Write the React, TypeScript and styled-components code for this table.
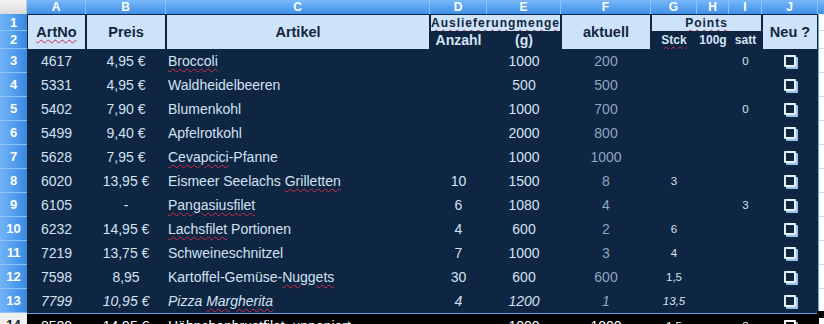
import styled, { createGlobalStyle } from 'styled-components';

const NAVY = '#0e2641';
const HEAD_BG = '#cde3fa';
const EDGE = '#6aa4e4';

const WIDTHS = [59, 80, 264, 57, 74, 90, 46, 32, 33, 56];
const COL_TEMPLATE = WIDTHS.map((w) => `${w}px`).join(' ');
const LETTERS = ['A', 'B', 'C', 'D', 'E', 'F', 'G', 'H', 'I', 'J'];
const ROW_HEIGHTS = [17, 18, 24, 24, 24, 24, 24, 24, 24, 24, 24, 24, 24, 24];

type Row = {
  nr: string;
  price: string;
  name: React.ReactNode;
  count?: string;
  grams: string;
  current: string;
  stck?: string;
  satt?: string;
};

const GlobalStyle = createGlobalStyle`
  html, body {
    margin: 0;
    padding: 0;
    overflow: hidden;
    background: #ffffff;
    font-family: "Liberation Sans", Arial, sans-serif;
  }
`;

const Sheet = styled.div`
  display: grid;
  grid-template-columns: 27px 1fr;
  grid-template-rows: 14px auto;
  width: 824px;
`;

const Corner = styled.div`
  background: linear-gradient(#f4f4f4, #dcdcdc);
  border-right: 1px solid #c8c8c8;
`;

const ColumnBar = styled.div`
  display: grid;
  grid-template-columns: ${COL_TEMPLATE} 1fr;
  background: linear-gradient(#78b8fa, #3f8fe6);
`;

const ColumnLetter = styled.div`
  display: flex;
  align-items: center;
  justify-content: center;
  border-right: 1px solid #8cc2f6;
  color: #ffffff;
  font-size: 12px;
  font-weight: bold;
  line-height: 1;
`;

const RowBar = styled.div`
  display: flex;
  flex-direction: column;
`;

const RowNumber = styled.div<{ $height: number; $plain?: boolean }>`
  height: ${(p) => p.$height}px;
  flex: none;
  box-sizing: border-box;
  display: flex;
  align-items: center;
  justify-content: center;
  border-bottom: 1px solid ${(p) => (p.$plain ? '#c8c8c8' : '#8cc2f6')};
  background: ${(p) =>
    p.$plain ? '#efefef' : 'linear-gradient(90deg, #72b4f8, #4292e8 80%, #3a86d8)'};
  color: ${(p) => (p.$plain ? '#202020' : '#ffffff')};
  font-size: 13px;
  font-weight: bold;
`;

const Body = styled.div`
  display: grid;
  grid-template-columns: 792px 1fr;
  align-content: start;
`;

const Selection = styled.div`
  position: relative;
  background: ${NAVY};
  border-right: 1px solid ${EDGE};
  border-bottom: 1px solid ${EDGE};
`;

const FillHandle = styled.div`
  position: absolute;
  right: -6px;
  bottom: -5px;
  width: 7px;
  height: 7px;
  background: #000000;
`;

const HeadGrid = styled.div`
  display: grid;
  grid-template-columns: ${COL_TEMPLATE};
  grid-template-rows: 17px 18px;
`;

const HeadCell = styled.div<{ $area: string; $dark?: boolean; $size?: number; $spaced?: boolean }>`
  grid-area: ${(p) => p.$area};
  box-sizing: border-box;
  display: flex;
  align-items: center;
  justify-content: center;
  background: ${(p) => (p.$dark ? NAVY : HEAD_BG)};
  border-left: 1px solid ${NAVY};
  border-right: 1px solid ${NAVY};
  border-top: ${(p) => (p.$dark ? 'none' : `1px solid ${NAVY}`)};
  color: ${(p) => (p.$dark ? '#d4e4f6' : '#13253d')};
  font-size: ${(p) => p.$size ?? 14.5}px;
  font-weight: bold;
  letter-spacing: ${(p) => (p.$spaced ? '1px' : '0')};
  white-space: nowrap;
  overflow: hidden;
`;

const DataRow = styled.div<{ $italic?: boolean; $black?: boolean }>`
  display: grid;
  grid-template-columns: ${COL_TEMPLATE};
  height: 24px;
  background: ${(p) => (p.$black ? '#000000' : 'transparent')};
  font-style: ${(p) => (p.$italic ? 'italic' : 'normal')};
`;

const Cell = styled.div<{ $align?: 'left' | 'center'; $tone?: 'main' | 'muted' | 'white'; $small?: boolean }>`
  display: flex;
  align-items: center;
  justify-content: ${(p) => (p.$align === 'left' ? 'flex-start' : 'center')};
  padding-left: ${(p) => (p.$align === 'left' ? '2px' : '0')};
  color: ${(p) => (p.$tone === 'muted' ? '#8ea6c2' : p.$tone === 'white' ? '#ffffff' : '#d2e2f4')};
  font-size: ${(p) => (p.$small ? 11.5 : 14)}px;
  white-space: nowrap;
  overflow: hidden;
`;

const Wavy = styled.span`
  text-decoration: underline wavy #d0284a;
  text-decoration-thickness: 1px;
  text-underline-offset: 2px;
`;

const Checkbox = styled.span<{ $dim?: boolean }>`
  width: 8px;
  height: 8px;
  border: 2px solid ${(p) => (p.$dim ? '#ffffff' : '#e8f1fb')};
  box-shadow: 2px 2px 0 ${(p) => (p.$dim ? '#9a9a9a' : '#9dc5f0')};
  border-radius: 1px;
`;

const RightFill = styled.div`
  display: flex;
  flex-direction: column;
  background: #ffffff;
`;

const GridLine = styled.div<{ $height: number }>`
  height: ${(p) => p.$height}px;
  box-sizing: border-box;
  border-bottom: 1px solid #d0d7e5;
`;

const rows: Row[] = [
  { nr: '4617', price: '4,95 €', name: <Wavy>Broccoli</Wavy>, grams: '1000', current: '200', satt: '0' },
  { nr: '5331', price: '4,95 €', name: 'Waldheidelbeeren', grams: '500', current: '500' },
  { nr: '5402', price: '7,90 €', name: 'Blumenkohl', grams: '1000', current: '700', satt: '0' },
  { nr: '5499', price: '9,40 €', name: 'Apfelrotkohl', grams: '2000', current: '800' },
  { nr: '5628', price: '7,95 €', name: <><Wavy>Cevapcici</Wavy>-Pfanne</>, grams: '1000', current: '1000' },
  { nr: '6020', price: '13,95 €', name: <>Eismeer Seelachs <Wavy>Grilletten</Wavy></>, count: '10', grams: '1500', current: '8', stck: '3' },
  { nr: '6105', price: '-', name: <Wavy>Pangasiusfilet</Wavy>, count: '6', grams: '1080', current: '4', satt: '3' },
  { nr: '6232', price: '14,95 €', name: <><Wavy>Lachsfilet</Wavy> Portionen</>, count: '4', grams: '600', current: '2', stck: '6' },
  { nr: '7219', price: '13,75 €', name: 'Schweineschnitzel', count: '7', grams: '1000', current: '3', stck: '4' },
  { nr: '7598', price: '8,95', name: <>Kartoffel-Gemüse-<Wavy>Nuggets</Wavy></>, count: '30', grams: '600', current: '600', stck: '1,5' },
  { nr: '7799', price: '10,95 €', name: <>Pizza <Wavy>Margherita</Wavy></>, count: '4', grams: '1200', current: '1', stck: '13,5' },
];

const lastRow: Row = {
  nr: '8520',
  price: '14,95 €',
  name: <>Hähnchenbrustfilet, <Wavy>unpaniert</Wavy></>,
  grams: '1000',
  current: '1000',
  stck: '1,5',
  satt: '3',
};

const RowCells = ({ row, black }: { row: Row; black?: boolean }) => {
  const tone = black ? 'white' : 'main';
  return (
    <>
      <Cell $tone={tone}>{row.nr}</Cell>
      <Cell $tone={tone}>{row.price}</Cell>
      <Cell $tone={tone} $align='left'>
        <span>{row.name}</span>
      </Cell>
      <Cell $tone={tone}>{row.count}</Cell>
      <Cell $tone={tone}>{row.grams}</Cell>
      <Cell $tone={black ? 'white' : 'muted'}>{row.current}</Cell>
      <Cell $tone={tone} $small>{row.stck}</Cell>
      <Cell />
      <Cell $tone={tone} $small>{row.satt}</Cell>
      <Cell>
        <Checkbox $dim={black} />
      </Cell>
    </>
  );
};

const App = () => {
  return (
    <>
      <GlobalStyle />
      <Sheet>
        <Corner />
        <ColumnBar>
          {LETTERS.map((l) => (
            <ColumnLetter key={l}>{l}</ColumnLetter>
          ))}
          <div />
        </ColumnBar>

        <RowBar>
          {ROW_HEIGHTS.map((h, i) => (
            <RowNumber key={i} $height={h} $plain={i === 13}>
              {i + 1}
            </RowNumber>
          ))}
        </RowBar>

        <Body>
          <Selection>
            <HeadGrid>
              <HeadCell $area='1 / 1 / 3 / 2'>
                <Wavy>ArtNo</Wavy>
              </HeadCell>
              <HeadCell $area='1 / 2 / 3 / 3'>Preis</HeadCell>
              <HeadCell $area='1 / 3 / 3 / 4'>Artikel</HeadCell>
              <HeadCell $area='1 / 4 / 2 / 6' $size={12} $spaced>
                <Wavy>Auslieferungmenge</Wavy>
              </HeadCell>
              <HeadCell $area='2 / 4 / 3 / 5' $dark $size={14}>
                Anzahl
              </HeadCell>
              <HeadCell $area='2 / 5 / 3 / 6' $dark $size={14}>
                (g)
              </HeadCell>
              <HeadCell $area='1 / 6 / 3 / 7'>aktuell</HeadCell>
              <HeadCell $area='1 / 7 / 2 / 10' $size={12} $spaced>
                <Wavy>Points</Wavy>
              </HeadCell>
              <HeadCell $area='2 / 7 / 3 / 8' $dark $size={12}>
                <Wavy>Stck</Wavy>
              </HeadCell>
              <HeadCell $area='2 / 8 / 3 / 9' $dark $size={12}>
                100g
              </HeadCell>
              <HeadCell $area='2 / 9 / 3 / 10' $dark $size={12}>
                satt
              </HeadCell>
              <HeadCell $area='1 / 10 / 3 / 11'>Neu ?</HeadCell>
            </HeadGrid>

            {rows.map((row, i) => (
              <DataRow key={row.nr} $italic={i === rows.length - 1}>
                <RowCells row={row} />
              </DataRow>
            ))}
            <FillHandle />
          </Selection>

          <RightFill>
            {ROW_HEIGHTS.slice(0, 13).map((h, i) => (
              <GridLine key={i} $height={i === 12 ? h + 1 : h} />
            ))}
          </RightFill>

          <DataRow $black>
            <RowCells row={lastRow} black />
          </DataRow>
          <RightFill>
            <GridLine $height={24} />
          </RightFill>
        </Body>
      </Sheet>
    </>
  );
};

export default App;
